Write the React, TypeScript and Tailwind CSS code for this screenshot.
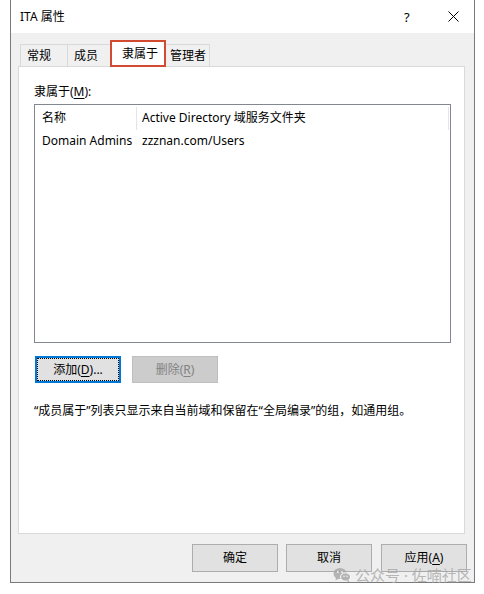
export default function App() {
  return (
    <div className="relative w-[484px] h-[594px] bg-white font-['Noto_Sans','Noto_Sans_CJK_SC',sans-serif] text-[12px] leading-[16px] text-black">
      <div className="ml-[10px] w-[465px] h-[583px] flex flex-col border-x border-b border-[#7a7a7a]">
        {/* title bar */}
        <div className="h-[33px] shrink-0 flex items-center bg-white pl-[9px] pr-[15px]">
          <span>ITA 属性</span>
          <span className="ml-auto w-[8px] text-[13px]">?</span>
          <svg className="ml-[36px]" width="11" height="11" viewBox="0 0 11 11">
            <path d="M0.5 0.5 L10.5 10.5 M10.5 0.5 L0.5 10.5" stroke="#000" strokeWidth="1" />
          </svg>
        </div>

        <div className="flex-1 bg-[#f0f0f0] flex flex-col">
          {/* tabs */}
          <div className="flex items-end h-[26px] mt-[7px] pl-[9px]">
            <div className="w-[48px] h-[22px] pl-[6px] flex items-center border-l border-t border-r border-[#d9d9d9]">常规</div>
            <div className="w-[42px] h-[22px] pl-[6px] flex items-center border-t border-[#d9d9d9]">成员</div>
            <div className="relative z-10 w-[56px] h-[27px] -mb-px pl-[10px] pt-[4px] bg-white border-2 border-[#d24a30]">隶属于</div>
            <div className="w-[44px] h-[22px] pl-[4px] flex items-center border-t border-r border-[#d9d9d9]">管理者</div>
          </div>

          {/* panel */}
          <div className="ml-[7px] w-[447px] h-[468px] bg-white border border-[#d9d9d9] pl-[15px] pt-[17px]">
            <div>
              隶属于(<span className="underline underline-offset-2">M</span>):
            </div>

            <div className="mt-[4px] w-[417px] h-[239px] border border-[#828790] bg-white">
              <div className="flex h-[25px] items-center">
                <div className="w-[101px] pl-[7px]">名称</div>
                <div className="w-px h-[23px] mt-[1px] bg-[#e5e5e5]" />
                <div className="flex-1 pl-[5px]">Active Directory 域服务文件夹</div>
                <div className="w-px h-[23px] mt-[1px] mr-[1px] bg-[#e5e5e5]" />
              </div>
              <div className="flex h-[22px] items-center">
                <div className="w-[102px] pl-[7px] whitespace-nowrap">Domain Admins</div>
                <div className="pl-[5px]">zzznan.com/Users</div>
              </div>
            </div>

            <div className="flex mt-[13px]">
              <button className="ml-px w-[86px] h-[27px] bg-[#e1e1e1] border-2 border-[#0078d7] outline-1 outline-dotted outline-black outline-offset-[-3px]">
                添加(<span className="underline underline-offset-2">D</span>)...
              </button>
              <button className="ml-[11px] w-[86px] h-[27px] bg-[#cccccc] border border-[#bfbfbf] text-[#838383]">
                删除(<span className="underline underline-offset-2">R</span>)
              </button>
            </div>

            <p className="mt-[20px]">“成员属于”列表只显示来自当前域和保留在“全局编录”的组，如通用组。</p>
          </div>

          {/* dialog buttons */}
          <div className="flex justify-end mt-[10px] pr-[7px]">
            <button className="w-[86px] h-[28px] bg-[#e1e1e1] border border-[#adadad]">确定</button>
            <button className="ml-[8px] w-[86px] h-[28px] bg-[#e1e1e1] border border-[#adadad]">取消</button>
            <button className="ml-[9px] w-[86px] h-[28px] bg-[#e1e1e1] border border-[#adadad]">
              应用(<span className="underline underline-offset-2">A</span>)
            </button>
          </div>
        </div>
      </div>

      {/* watermark */}
      <div className="absolute left-[333px] top-[566px] flex items-center text-[15px] leading-[18px] text-[#a6a6a6]/80">
        <svg width="18" height="16" viewBox="0 0 18 16" className="opacity-80">
          <ellipse cx="7" cy="6.5" rx="6.5" ry="5.5" fill="#a6a6a6" />
          <path d="M3 10.5 L2.5 13.5 L6 11.5 Z" fill="#a6a6a6" />
          <circle cx="4.8" cy="5" r="0.9" fill="#fff" />
          <circle cx="9" cy="5" r="0.9" fill="#fff" />
          <ellipse cx="12.5" cy="10" rx="5" ry="4.2" fill="#a6a6a6" stroke="#fff" strokeWidth="1" />
          <path d="M15.5 13 L16.5 15.5 L13.5 14 Z" fill="#a6a6a6" />
          <circle cx="11" cy="9.3" r="0.7" fill="#fff" />
          <circle cx="14" cy="9.3" r="0.7" fill="#fff" />
        </svg>
        <span className="ml-[4px] whitespace-nowrap">公众号 · 佐喃社区</span>
      </div>
    </div>
  )
}
